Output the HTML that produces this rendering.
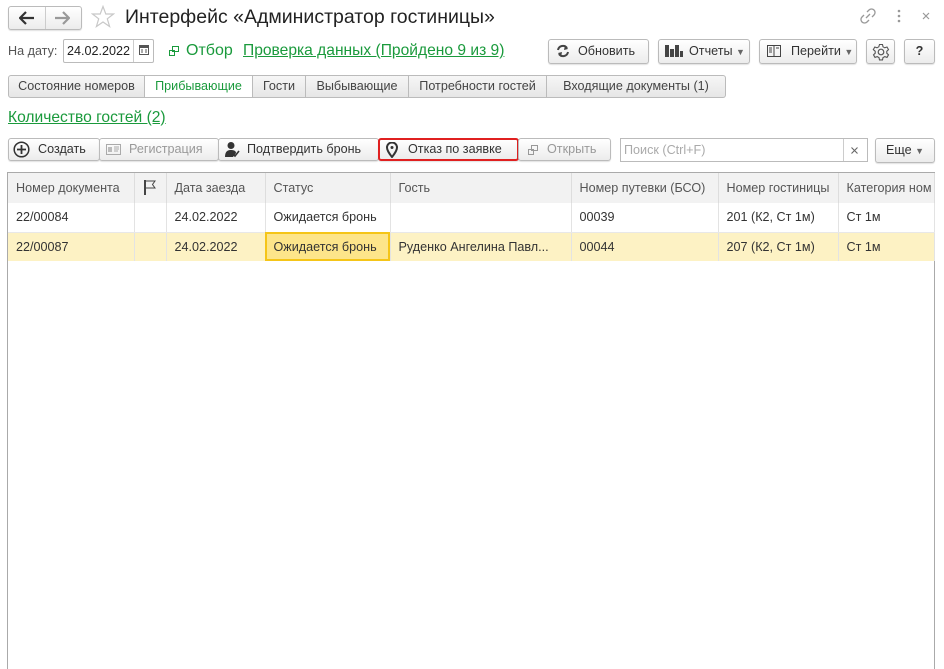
<!DOCTYPE html><html><head><meta charset="utf-8"><style>
body{margin:0;width:944px;height:669px;overflow:hidden;background:#fff;font-family:"Liberation Sans",Arial,sans-serif;font-size:12.6px;color:#333;position:relative}
.a{position:absolute}
.btn{position:absolute;height:23px;border:1px solid #bbb;border-radius:3px;background:linear-gradient(#fff,#ececec);box-sizing:border-box;line-height:21px;font-size:12.6px;color:#333;box-shadow:0 1px 1px rgba(0,0,0,.12);white-space:nowrap}
.g{color:#1a9a3c}
.tab{position:absolute;top:75px;height:23px;box-sizing:border-box;border:1px solid #bbb;border-left:none;background:linear-gradient(#f6f6f6,#e6e6e6);line-height:21px;text-align:center;color:#444;white-space:nowrap}
table{border-collapse:collapse;position:absolute;left:8px;top:173px;table-layout:fixed}
td{height:29px;padding:0 0 0 8px;box-sizing:border-box;white-space:nowrap;overflow:hidden;border-right:1px solid #e3e3e3;color:#333}
tr.h td{background:#f2f2f2;color:#555;height:30px;border-right:1px solid #ddd}
tr.r1 td{border-bottom:1px solid #e8e8e8}
tr.r2 td{background:#fdf2c4}
svg{position:absolute}
</style></head><body>
<div class="btn" style="left:8px;top:6px;width:74px;height:24px"></div>
<div class="a" style="left:45px;top:7px;width:1px;height:22px;background:#ccc"></div>
<svg style="left:19px;top:11px" width="16" height="14"><path d="M1 7H15M7 1L1 7L7 13" stroke="#333" stroke-width="2.2" fill="none"/></svg>
<svg style="left:54px;top:11px" width="16" height="14"><path d="M1 7H15M9 1L15 7L9 13" stroke="#999" stroke-width="2.2" fill="none"/></svg>
<svg style="left:91px;top:5px" width="24" height="24"><path d="M12 1.5L14.8 9H22.5L16.3 13.8L18.6 21.5L12 17L5.4 21.5L7.7 13.8L1.5 9H9.2Z" stroke="#c8c8c8" stroke-width="1.2" fill="none"/></svg>
<div class="a" style="left:125px;top:6px;font-size:19.5px;color:#222">Интерфейс «Администратор гостиницы»</div>
<svg style="left:859px;top:7px" width="18" height="18"><path d="M7 11L11 7M8 5L10 3a3 3 0 0 1 5 5L13 10M10 13L8 15a3 3 0 0 1-5-5L5 8" stroke="#999" stroke-width="1.3" fill="none"/></svg>
<svg style="left:897px;top:9px" width="4" height="14"><circle cx="2" cy="2" r="1.3" fill="#999"/><circle cx="2" cy="7" r="1.3" fill="#999"/><circle cx="2" cy="12" r="1.3" fill="#999"/></svg>
<svg style="left:922px;top:12px" width="8" height="8"><path d="M1 1L7 7M7 1L1 7" stroke="#999" stroke-width="1.2"/></svg>

<div class="a" style="left:8px;top:44px;color:#555">На дату:</div>
<div class="a" style="left:63px;top:39px;width:91px;height:24px;border:1px solid #bbb;box-sizing:border-box;border-radius:2px"></div>
<div class="a" style="left:133px;top:40px;width:1px;height:22px;background:#ccc"></div>
<div class="a" style="left:67px;top:44px;color:#222">24.02.2022</div>
<svg style="left:139px;top:45px" width="10" height="10"><rect x="0.5" y="0.5" width="9" height="9" fill="none" stroke="#555"/><rect x="0" y="0" width="10" height="3" fill="#555"/><path d="M2 5h2M6 5h2M2 7h2M6 7h2" stroke="#555"/></svg>
<svg style="left:169px;top:46px" width="10" height="10"><rect x="3.5" y="0.5" width="6" height="5" fill="none" stroke="#1a9a3c"/><rect x="0.5" y="4.5" width="5" height="5" fill="none" stroke="#1a9a3c"/></svg>
<div class="a g" style="left:186px;top:42px;font-size:16px">Отбор</div>
<div class="a g" style="left:243px;top:42px;font-size:15.6px;text-decoration:underline">Проверка данных (Пройдено 9 из 9)</div>

<div class="btn" style="left:548px;top:39px;width:101px;height:25px;padding-left:29px;line-height:23px">Обновить</div>
<svg style="left:556px;top:44px" width="14" height="14"><path d="M11 4A5 5 0 0 0 2 6M3 10A5 5 0 0 0 12 8" stroke="#444" stroke-width="2" fill="none"/><path d="M9 1L12 5L8 6Z M5 13L2 9L6 8Z" fill="#444"/></svg>
<div class="btn" style="left:658px;top:39px;width:92px;height:25px;padding-left:30px;line-height:23px">Отчеты <span style="font-size:9px;color:#666">▼</span></div>
<div class="a" style="left:665px;top:45px;width:4px;height:12px;background:#444"></div><div class="a" style="left:670px;top:49px;width:4px;height:8px;background:#444"></div><div class="a" style="left:675px;top:45px;width:4px;height:12px;background:#444"></div><div class="a" style="left:680px;top:51px;width:3px;height:6px;background:#444"></div>
<div class="btn" style="left:759px;top:39px;width:98px;height:25px;padding-left:31px;line-height:23px">Перейти <span style="font-size:9px;color:#666">▼</span></div>
<svg style="left:767px;top:45px" width="14" height="12"><rect x="0.5" y="0.5" width="13" height="11" fill="none" stroke="#444"/><path d="M7 0V12M2 3h3M2 5h3M2 7h3M9 3h3" stroke="#444"/></svg>
<div class="btn" style="left:866px;top:39px;width:29px;height:25px"></div>
<svg style="left:872px;top:43px" width="18" height="18"><circle cx="9" cy="9" r="2.8" fill="none" stroke="#555" stroke-width="1.2"/><path d="M7.5 1.5h3l.5 2.3 1.8 1 2.2-.8 1.5 2.6-1.7 1.6v2l1.7 1.6-1.5 2.6-2.2-.8-1.8 1-.5 2.3h-3l-.5-2.3-1.8-1-2.2.8-1.5-2.6 1.7-1.6v-2L1.3 6.6l1.5-2.6 2.2.8 1.8-1z" fill="none" stroke="#555" stroke-width="1.1"/></svg>
<div class="btn" style="left:904px;top:39px;width:31px;height:25px;text-align:center;font-weight:bold;line-height:23px">?</div>

<div class="tab" style="left:8px;width:137px;border-left:1px solid #bbb;border-radius:3px 0 0 3px">Состояние номеров</div>
<div class="tab" style="left:145px;width:108px;background:#fff;color:#1a9a3c">Прибывающие</div>
<div class="tab" style="left:253px;width:53px">Гости</div>
<div class="tab" style="left:306px;width:103px">Выбывающие</div>
<div class="tab" style="left:409px;width:138px">Потребности гостей</div>
<div class="tab" style="left:547px;width:179px;border-radius:0 3px 3px 0">Входящие документы (1)</div>

<div class="a g" style="left:8px;top:109px;font-size:15.6px;text-decoration:underline">Количество гостей (2)</div>

<div class="btn" style="left:8px;top:138px;width:92px;padding-left:29px">Создать</div>
<svg style="left:13px;top:141px" width="17" height="17"><circle cx="8.5" cy="8.5" r="7.3" fill="none" stroke="#333" stroke-width="1.5"/><path d="M8.5 4V13M4 8.5H13" stroke="#333" stroke-width="1.8"/></svg>
<div class="btn" style="left:99px;top:138px;width:120px;padding-left:29px;color:#999">Регистрация</div>
<svg style="left:106px;top:144px" width="15" height="11"><rect x="0.5" y="0.5" width="14" height="10" fill="none" stroke="#aaa"/><rect x="2" y="3" width="4" height="5" fill="#bbb"/><path d="M8 3h5M8 5h5M8 7h4" stroke="#aaa"/></svg>
<div class="btn" style="left:218px;top:138px;width:161px;padding-left:28px">Подтвердить бронь</div>
<svg style="left:224px;top:141px" width="16" height="17"><circle cx="7" cy="4.5" r="3.5" fill="#333"/><path d="M1 16C1 10 4 9 7 9S12 10 12 12L9 16Z" fill="#333"/><path d="M9 13L11 15L15 10" stroke="#333" stroke-width="1.6" fill="none"/></svg>
<div class="btn" style="left:378px;top:138px;width:141px;padding-left:28px;border:2px solid #e02020;line-height:19px">Отказ по заявке</div>
<svg style="left:386px;top:142px" width="12" height="16"><path d="M6 15C6 15 1 9 1 5.5A5 5 0 0 1 11 5.5C11 9 6 15 6 15Z" fill="none" stroke="#333" stroke-width="2"/><circle cx="6" cy="5.5" r="1.5" fill="#333"/></svg>
<div class="btn" style="left:518px;top:138px;width:93px;padding-left:28px;color:#999">Открыть</div>
<svg style="left:528px;top:145px" width="10" height="10"><rect x="3.5" y="0.5" width="6" height="5" fill="none" stroke="#999"/><rect x="0.5" y="4.5" width="5" height="5" fill="none" stroke="#999"/></svg>
<div class="a" style="left:620px;top:138px;width:248px;height:24px;border:1px solid #bbb;box-sizing:border-box;padding-left:3px;line-height:22px;color:#aaa">Поиск (Ctrl+F)</div>
<div class="a" style="left:843px;top:139px;width:1px;height:22px;background:#ccc"></div>
<svg style="left:851px;top:147px" width="7" height="7"><path d="M0.5 0.5L6.5 6.5M6.5 0.5L0.5 6.5" stroke="#666" stroke-width="1.1"/></svg>
<div class="btn" style="left:875px;top:138px;width:60px;height:25px;text-align:center;line-height:23px">Еще <span style="font-size:9px;color:#666">▼</span></div>

<div class="a" style="left:7px;top:172px;width:928px;height:497px;border:1px solid #aaa;border-bottom:none;box-sizing:border-box"></div>
<table>
<colgroup><col style="width:126px"><col style="width:32px"><col style="width:99px"><col style="width:125px"><col style="width:181px"><col style="width:147px"><col style="width:120px"><col style="width:96px"></colgroup>
<tr class="h"><td>Номер документа</td><td><svg style="position:static" width="14" height="16"><path d="M2 1V16" stroke="#444" stroke-width="2"/><path d="M3 2H12L9.5 5.5L12 9H3" fill="none" stroke="#444"/></svg></td><td>Дата заезда</td><td>Статус</td><td>Гость</td><td>Номер путевки (БСО)</td><td>Номер гостиницы</td><td>Категория ном</td></tr>
<tr class="r1"><td>22/00084</td><td></td><td>24.02.2022</td><td>Ожидается бронь</td><td></td><td>00039</td><td>201 (К2, Ст 1м)</td><td>Ст 1м</td></tr>
<tr class="r2"><td>22/00087</td><td></td><td>24.02.2022</td><td style="background:#fde58a;outline:2px solid #f5c518;outline-offset:-2px">Ожидается бронь</td><td>Руденко Ангелина Павл...</td><td>00044</td><td>207 (К2, Ст 1м)</td><td>Ст 1м</td></tr>
</table>
</body></html>
